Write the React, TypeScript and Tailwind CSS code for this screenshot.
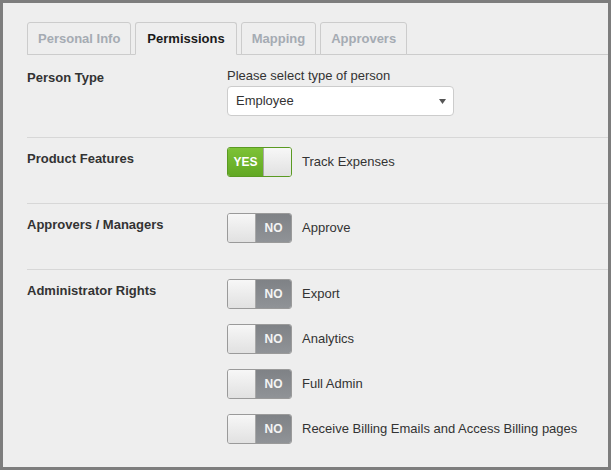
import React from "react";

const tabs = [
  { name: "Personal Info", active: false },
  { name: "Permissions", active: true },
  { name: "Mapping", active: false },
  { name: "Approvers", active: false },
];

const Toggle = ({ on }: { on: boolean }) => {
  if (on) {
    return (
      <div className="flex h-[30px] w-[65px] shrink-0 overflow-hidden rounded-[3px] border border-[#5a9a22]">
        <div className="flex w-[35px] items-center justify-center bg-gradient-to-b from-[#7dc236] to-[#62a823] text-[12px] font-bold text-white">
          YES
        </div>
        <div className="flex-1 border-l border-[#a8a8a8] bg-gradient-to-b from-[#f7f7f7] to-[#e1e1e1]" />
      </div>
    );
  }
  return (
    <div className="flex h-[30px] w-[65px] shrink-0 overflow-hidden rounded-[3px] border border-[#9a9a9a]">
      <div className="w-[28px] border-r border-[#a8a8a8] bg-gradient-to-b from-[#f7f7f7] to-[#e1e1e1]" />
      <div className="flex flex-1 items-center justify-center bg-gradient-to-b from-[#7f8286] to-[#909397] text-[12px] font-bold text-[#f4f4f4]">
        NO
      </div>
    </div>
  );
};

const ToggleItem = ({ on, label }: { on: boolean; label: string }) => (
  <div className="mb-[15px] flex items-center gap-[10px] leading-[30px]">
    <Toggle on={on} />
    <span>{label}</span>
  </div>
);

const Row = ({
  label,
  children,
  className = "",
}: {
  label: string;
  children: React.ReactNode;
  className?: string;
}) => (
  <div className={`flex border-b border-[#d7d7d7] ${className}`}>
    <div className="mt-[2px] w-[200px] shrink-0 font-bold leading-[20px] text-[#333]">{label}</div>
    <div className="flex-1">{children}</div>
  </div>
);

export default function App() {
  return (
    <div
      className="h-[470px] w-[611px] overflow-hidden border-[3px] border-[#7d7d7d] bg-[#eeeeee] pl-[24px] pt-[19px] text-[13px] text-[#333]"
      style={{ fontFamily: '"Liberation Sans", Arial, sans-serif' }}
    >
      <div className="flex items-end gap-[4px] border-b border-[#cccccc]">
        {tabs.map((t) => (
          <div
            key={t.name}
            className={`-mb-px flex h-[33px] items-center rounded-t-[3px] border border-[#cccccc] bg-[#eeeeee] px-[10px] font-bold ${
              t.active ? "border-b-[#eeeeee] px-[11px] text-[#1a1a1a]" : "text-[#a5abb3]"
            }`}
          >
            {t.name}
          </div>
        ))}
      </div>

      <Row label="Person Type" className="pb-[21px] pt-[11px]">
        <div className="leading-[20px]">Please select type of person</div>
        <div className="flex h-[30px] w-[227px] items-center justify-between rounded-[4px] border border-[#cccccc] bg-white pl-[8px] pr-[7px]">
          <span>Employee</span>
          <svg width="7" height="5" viewBox="0 0 7 5">
            <path d="M0 0h7L3.5 5z" fill="#555" />
          </svg>
        </div>
      </Row>

      <Row label="Product Features" className="pb-[11px] pt-[9px]">
        <ToggleItem on label="Track Expenses" />
      </Row>

      <Row label="Approvers / Managers" className="pb-[11px] pt-[9px]">
        <ToggleItem on={false} label="Approve" />
      </Row>

      <Row label="Administrator Rights" className="pb-[11px] pt-[9px]">
        <ToggleItem on={false} label="Export" />
        <ToggleItem on={false} label="Analytics" />
        <ToggleItem on={false} label="Full Admin" />
        <ToggleItem on={false} label="Receive Billing Emails and Access Billing pages" />
      </Row>
    </div>
  );
}
